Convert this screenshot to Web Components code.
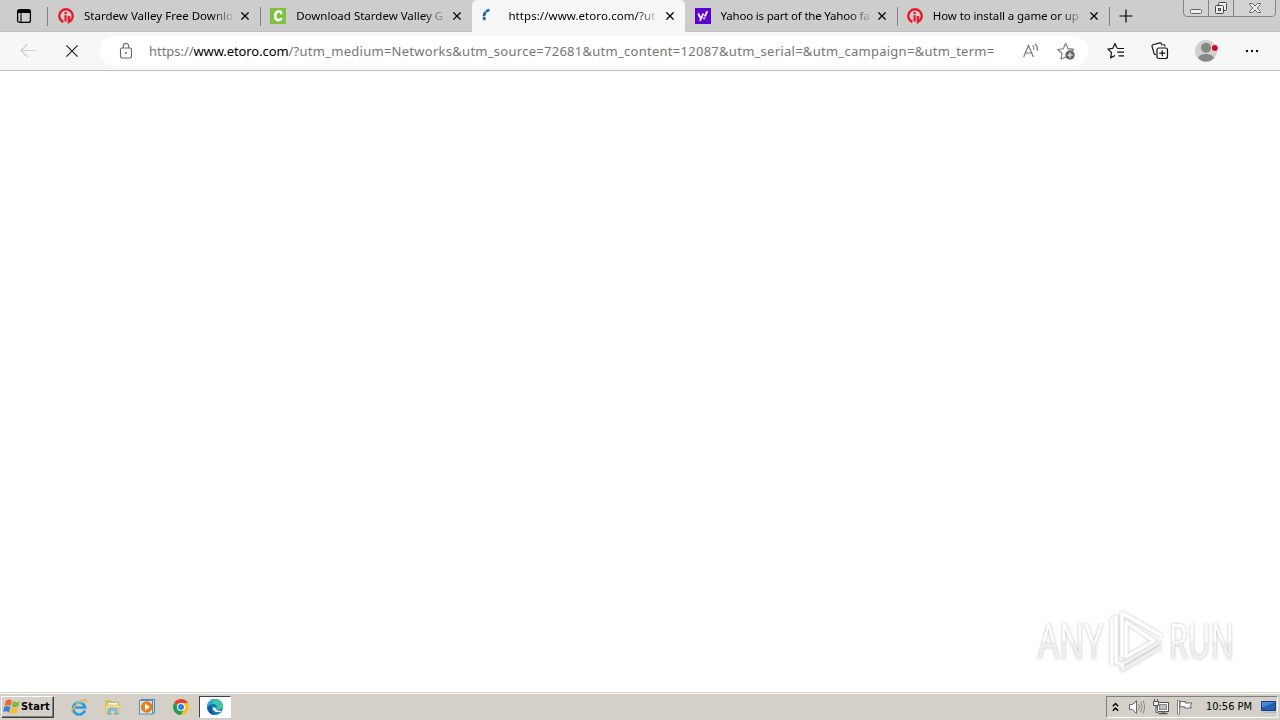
<!DOCTYPE html>
<html lang="en"><head><meta charset="utf-8"><title>Browser</title>
<style>html,body{margin:0;height:100%;overflow:hidden;background:#fff}</style></head>
<body><desktop-screen></desktop-screen>
<script>
const define = (name, html, init) => {
  const t = document.createElement('template');
  t.innerHTML = html;
  customElements.define(name, class extends HTMLElement {
    constructor() { super(); this.attachShadow({mode: 'open'}).append(t.content.cloneNode(true)); }
    connectedCallback() { if (init) init(this, this.shadowRoot); }
  });
};

/* Text spaced so that it fills the width given in "w" */
define('fit-text', `<style>:host{display:inline-block;white-space:pre;flex:none}span{display:inline-block}</style><span></span>`, (el, r) => {
  const s = r.querySelector('span'), text = el.getAttribute('text');
  s.textContent = text;
  const w = +el.getAttribute('w');
  el.style.width = w + 'px';
  s.style.letterSpacing = (w - s.getBoundingClientRect().width) / text.length + 'px';
});

const icons = {
  tabs: ['0 0 16 16', `<rect x="1.600" y="1.600" width="12.800" height="12.800" rx="2" fill="none" stroke="#000" stroke-width="1.300"/><path d="M1.600 5V3.400Q1.600 1.600 3.400 1.600h9.200q1.800 0 1.800 1.800V5z" fill="#000"/><path d="M5 5v9.400" stroke="#000" stroke-width="1.100"/>`],
  ig: ['0 0 16 16', `<path d="M5.300 14.100A6.700 6.700 0 1 1 10.900 14V8" fill="none" stroke="#ea1a2a" stroke-width="2.400"/><path d="M7.600 7.200v6.300" stroke="#ea1a2a" stroke-width="2.300"/><circle cx="7.600" cy="5" r="1.300" fill="#ea1a2a"/>`],
  croco: ['0 0 16 16', `<path fill="#7fc242" d="M0 0h16v16H0z"/><path d="M11.200 5.300c.2-3.500-5.600-2.400-6 2.200-.4 5 3.400 5.500 6 3.500" fill="none" stroke="#fff" stroke-width="2.500" stroke-linecap="round"/>`],
  spin: ['0 0 16 16', `<path d="M7.500 2A6.500 6.500 0 0 0 3 12" fill="none" stroke="#1768a8" stroke-width="2.700" stroke-dasharray="4 .7"/>`],
  yahoo: ['0 0 16 16', `<path fill="#5f01d1" d="M0 0h16v16H0z"/><path d="M3.200 5.500l2.300 4.700M8.300 5.500L5 13" fill="none" stroke="#fff" stroke-width="1.800"/><path d="M12.300 3.200L9.800 8.500" stroke="#fff" stroke-width="1.800"/><circle cx="9.200" cy="10.300" r="1.100" fill="#fff"/>`],
  close: ['0 0 8 8', `<path d="M.4.4l7.200 7.200M7.600.4L.4 7.600" stroke="#000" stroke-width="1.300"/>`],
  plus: ['0 0 14 14', `<path d="M7 .5v13M.5 7h13" stroke="#000" stroke-width="1.200"/>`],
  back: ['0 0 16 16', `<path d="M15.500 7.500H1M7.500 1L1 7.500 7.500 14" fill="none" stroke="#cecece" stroke-width="1.200"/>`],
  stop: ['0 0 12 12', `<path d="M.4.4l11.200 11.200M11.600.4L.4 11.600" stroke="#1b1b1b" stroke-width="1.150"/>`],
  lock: ['0 0 14 16', `<rect x="1.500" y="5" width="11" height="10" rx="1.500" fill="none" stroke="#666" stroke-width="1.100"/><path d="M4.300 5V3.200a2.700 2.700 0 0 1 5.400 0V5" fill="none" stroke="#666" stroke-width="1.100"/><circle cx="7" cy="10" r="1" fill="#666"/>`],
  read: ['0 0 16 16', `<path d="M.7 14L5.500 2.300 10.300 14M2.400 10h6.200" fill="none" stroke="#777" stroke-width="1.200"/><path d="M9.500 2.400q2 1.800 1.300 4.300M12 .8q3.200 3 2 7" fill="none" stroke="#777" stroke-width="1.200"/>`],
  staradd: ['0 0 18 18', `<path d="M9 15l-5 2 1-5.500-4.200-4 5.500-.8L8.700 1.300 11 6.600l5.700.8-2 2" fill="none" stroke="#777" stroke-width="1.100" stroke-linejoin="round"/><circle cx="13" cy="13" r="4.700" fill="#626262"/><path d="M13 10.300v5.400M10.300 13h5.400" stroke="#fff" stroke-width="1.100"/>`],
  fav: ['0 0 18 18', `<path d="M10 6L8 1.600 5.800 6.300.9 7l3.600 3.600-.9 5.300L8 13.500M10.200 6.500H17M10.200 10.200H17M11.500 13.900H17" fill="none" stroke="#111" stroke-width="1.200" stroke-linejoin="round"/>`],
  coll: ['0 0 18 18', `<path d="M5 12.700L3.300 12 1 4.500Q.7 3.200 2 2.700L8.800.9Q10.300.6 10.700 2l.4 1.500M14 4.500V4q0-1.400-1.700-1.400" fill="none" stroke="#111" stroke-width="1.100"/><rect x="6" y="6" width="10.500" height="10.500" rx="2" fill="#f7f7f7" stroke="#111" stroke-width="1.200"/><path d="M11.250 8.200v6M8.250 11.200h6" stroke="#111" stroke-width="1.200"/>`],
  user: ['0 0 24 24', `<circle cx="11" cy="12" r="11" fill="#d1d0ce"/><circle cx="11" cy="8.800" r="5" fill="#8a8886"/><path d="M3.300 19.500c0-6 15.400-6 15.400 0q-7.500 6.500-15.400 0z" fill="#8a8886"/><circle cx="19.800" cy="9" r="3.600" fill="#eee"/><circle cx="19.800" cy="9" r="2.900" fill="#d3081a"/>`],
  more: ['0 0 14 4', `<g fill="#111"><circle cx="2" cy="2" r="1.200"/><circle cx="7" cy="2" r="1.200"/><circle cx="12" cy="2" r="1.200"/></g>`],
  min: ['0 0 14 14', `<rect x="1.500" y="8.500" width="11" height="4" rx="1" fill="#eee" stroke="#666"/>`],
  restore: ['0 0 14 14', `<rect x="4.500" y="1.500" width="8" height="8" rx="1" fill="#eee" stroke="#444"/><rect x="1.500" y="4.500" width="8" height="8" rx="1" fill="#eee" stroke="#444"/><rect x="4.500" y="7.500" width="2" height="2" fill="none" stroke="#444"/>`],
  winx: ['0 0 14 14', `<path d="M1.500 2.500h3.200L7 5.200l2.300-2.700h3.200v1L9.200 7l3.300 3.500v1H9.300L7 8.800l-2.300 2.700H1.500v-1L4.800 7 1.500 3.500z" fill="#eee" stroke="#666"/>`],
  win: ['0 0 18 17', `<path d="M3 2.500q3-2 6 .2L7.700 8Q5 6 1.600 7.800z" fill="#ef6430"/><path d="M10 3.100q3 2 6.700.1L15.300 8.400q-3.600 1.600-6.500-.2z" fill="#7fb93c"/><path d="M1.400 8.700Q4.500 7 7.400 9L6 14.500Q3 12.500 0 14z" fill="#3784ce"/><path d="M8.500 9.300q3 1.700 6.600.2L13.700 14.700q-3.500 1.600-6.500 0z" fill="#f7bd29"/>`],
  ie: ['0 0 18 18', `<path d="M14.800 12.300A6 6 0 1 1 15 9.500H5" fill="none" stroke="#2d9be2" stroke-width="2.700"/><path d="M2.500 15.500C-1 13 8 3.500 14.200 1.700q3.300-.6 1.600 3.200" fill="none" stroke="#e3b545" stroke-width="1.400"/><path d="M5.500 5.300Q9 2.800 12.500 5" fill="none" stroke="#8dd3f5"/>`],
  folder: ['0 0 18 18', `<path d="M1.500 3.500l1-1.500h4l1 1.500H15V8H1.500z" fill="#dfbb57"/><path d="M3.500 4.500h10.500V9H3.500z" fill="#fff" stroke="#91b976" stroke-width=".7"/><path d="M1.500 7h14.500l-.7 8.500H2z" fill="#f4db83" stroke="#d4b565" stroke-width=".7"/><path d="M4 16.500V11.500q0-1.500 1.500-1.500h6.500q1.500 0 1.500 1.500v5H11v-4H6.500v4z" fill="#80c4e7" stroke="#559bbb" stroke-width=".5"/>`],
  media: ['0 0 18 18', `<rect x="3" y="1.500" width="13.500" height="13.500" fill="#b9dbef" stroke="#4e8ab7"/><rect x="1.500" y="2.500" width="13" height="13.500" fill="#d0e7f4" stroke="#5a91b5"/><circle cx="8.700" cy="9" r="5.800" fill="#ef7b13"/><path d="M7 5.500v7l5-3.500z" fill="#fff"/>`],
  chrome: ['0 0 18 18', `<path d="M9 9L2.100 5A8 8 0 0 1 15.900 5z" fill="#e34133"/><path d="M2.100 5A8 8 0 0 0 9 17l3.500-6L9 9z" fill="#229d52"/><path d="M15.900 5A8 8 0 0 1 9 17l3.500-6L9 5z" fill="#fbc318"/><circle cx="9" cy="9" r="4" fill="#fff"/><circle cx="9" cy="9" r="3" fill="#397de5"/>`],
  edge: ['0 0 18 18', `<circle cx="9" cy="9" r="8" fill="#1477bd"/><path d="M1 9C1-1.500 17-1.500 17 8c0 4-6 4.500-6.500 2C12 7 8 5 5 6Q2 7 1 9z" fill="#42c7a1"/><path d="M1 8.500Q2 1 9.500 1 6 6 1 8.500z" fill="#2bafd8"/><path d="M6.500 9Q6.500 14 12 14.200q3 .1 4-2-.5.5-2.500.6-3.500 0-3.400-2.800z" fill="#fff"/><path d="M6.700 8.200Q3.500 12 8.700 17 3 16.500 1.200 10.500 3 7 6.700 8.200z" fill="#1453a3"/>`],
  chev: ['0 0 7 10', `<path d="M.8 4.200L3.500 1.500l2.700 2.700M.8 8.700L3.500 6l2.700 2.700" fill="none" stroke="#000" stroke-width="1.500"/>`],
  sound: ['0 0 18 18', `<path d="M1.500 6.500h3L8.500 2.500v13l-4-4h-3z" fill="#fff" stroke="#666"/><path d="M10.500 6q2 3 0 6M12.700 4q3 5 0 10M14.900 2.700q3.400 6.300 0 12.600" fill="none" stroke="#888" stroke-width="1"/>`],
  net: ['0 0 18 18', `<rect x="5.500" y="4.500" width="11" height="9" fill="#fff" stroke="#555"/><rect x="7.500" y="6.500" width="7" height="5" fill="#bbb" stroke="#888"/><path d="M6.500 15.500h9M11.500 13.500v2" stroke="#555" stroke-width="1.500"/><path d="M1.500 3.500h5v4h-5zM2.500 1v2M5.500 1v2M4 7.500v7h2" fill="#eee" stroke="#555"/>`],
  flag: ['0 0 18 18', `<path d="M2.500 2v14.500" stroke="#555" stroke-width="2.300"/><path d="M2.500 2.500v13.500" stroke="#fff"/><path d="M4 3.500h5.500v1.500H16l-2 3 1.500 2H8.500V8.800H4z" fill="#fff" stroke="#666"/>`],
  desktop: ['0 0 18 16', `<path d="M1.500 2.500h14v9h-14z" fill="#245fb5" stroke="#163c7d"/><path d="M2 3h13L2 8.500z" fill="#4f8ad6"/><path d="M2 12.500h14l1.500 1.500H3.500z" fill="#a9bdce"/>`]
};
define('ui-icon', `<style>:host{display:block;flex:none}svg{display:block;width:100%;height:100%}</style><svg></svg>`, (el, r) => {
  const [box, body] = icons[el.getAttribute('name')], s = r.querySelector('svg');
  s.setAttribute('viewBox', box); s.innerHTML = body;
  const [, , w, h] = box.split(' ');
  el.style.width = w + 'px'; el.style.height = h + 'px';
});

define('browser-tab', `<style>
:host{display:flex;box-sizing:border-box;width:212.200px;height:32px;align-items:center;padding:0 11px 0 10px;flex:none;position:relative}
:host([active]){background:#f7f7f7;border-radius:5px 5px 0 0}
:host([sep])::after{content:"";position:absolute;left:212px;top:7px;width:1px;height:19px;background:#808080}
.label{margin-left:10px;width:149px;overflow:hidden;height:18px;line-height:18px;-webkit-mask-image:linear-gradient(90deg,#000 86%,transparent 102%)}
.x{margin-left:auto}
</style><slot></slot><div class="label"></div><ui-icon class="x" name="close"></ui-icon>`, (el, r) => {
  const f = document.createElement('fit-text');
  f.setAttribute('text', el.getAttribute('label')); f.setAttribute('w', el.getAttribute('w'));
  r.querySelector('.label').append(f);
});

define('window-buttons', `<style>
:host{display:flex;position:absolute;right:4px;top:-1px;height:18px;box-sizing:border-box;border:1px solid #858585;border-radius:0 0 4px 4px;background:#d2d2d2}
div{display:flex;align-items:center;justify-content:center;width:24px}
div+div{border-left:1px solid #858585}.c{width:41px}
</style><div><ui-icon name="min"></ui-icon></div><div><ui-icon name="restore"></ui-icon></div><div class="c"><ui-icon name="winx"></ui-icon></div>`);

define('tab-strip', `<style>
:host{display:flex;height:32px;background:#cdcdcd;align-items:center;position:relative;font:11.500px/18px "Noto Sans","Open Sans",sans-serif;color:#000;box-shadow:inset 0 -1px #c0c0c0}
.lead{width:48px;height:32px;box-sizing:border-box;padding:8px 0 0 16px;position:relative;flex:none}
.lead::after{content:"";position:absolute;left:47px;top:7px;width:1px;height:19px;background:#808080}
.plus{margin-left:10px}
</style><div class="lead"><ui-icon name="tabs"></ui-icon></div>
<browser-tab sep label="Stardew Valley Free Downlo" w="149"><ui-icon name="ig"></ui-icon></browser-tab>
<browser-tab label="Download Stardew Valley G" w="147"><ui-icon name="croco"></ui-icon></browser-tab>
<browser-tab active label="https://www.etoro.com/?ut" w="147"><ui-icon name="spin"></ui-icon></browser-tab>
<browser-tab sep label="Yahoo is part of the Yahoo fa" w="149"><ui-icon name="yahoo"></ui-icon></browser-tab>
<browser-tab sep label="How to install a game or up" w="146"><ui-icon name="ig"></ui-icon></browser-tab>
<ui-icon class="plus" name="plus"></ui-icon><window-buttons></window-buttons>`);

define('address-bar', `<style>
:host{display:flex;box-sizing:border-box;width:988px;height:30px;border-radius:15px;background:#fff;align-items:center;padding:0 13px 0 19px;font:13px/20px "Noto Sans","Open Sans",sans-serif;color:#767676;flex:none}
.u{display:flex;margin-left:16px}.h{color:#000}.r{margin-left:auto}.s{margin-left:18px}
</style><ui-icon name="lock"></ui-icon><div class="u"><fit-text text="https://" w="44.500"></fit-text><fit-text class="h" text="www.etoro.com" w="95"></fit-text><fit-text text="/?utm_medium=Networks&amp;utm_source=72681&amp;utm_content=12087&amp;utm_serial=&amp;utm_campaign=&amp;utm_term=" w="706"></fit-text></div>
<ui-icon class="r" name="read"></ui-icon><ui-icon class="s" name="staradd"></ui-icon>`);

define('tool-bar', `<style>
:host{display:flex;height:39px;box-sizing:border-box;background:#f7f7f7;border-bottom:1px solid #bdbdbd;align-items:center;padding-left:20px}
.stop{margin:0 22px 0 30px}.f{margin-left:19px}.c{margin-left:26px}.p{margin-left:26px}.m{margin-left:26px}
</style><ui-icon name="back"></ui-icon><ui-icon class="stop" name="stop"></ui-icon><address-bar></address-bar><ui-icon class="f" name="fav"></ui-icon><ui-icon class="c" name="coll"></ui-icon><ui-icon class="p" name="user"></ui-icon><ui-icon class="m" name="more"></ui-icon>`);

define('any-run-mark', `<style>
:host{display:flex;position:absolute;left:1038px;top:609px;align-items:center;font:50px/64px "Open Sans","Noto Sans",sans-serif;filter:drop-shadow(0 0 1.500px #bbb)}
.t{width:66px;display:block}.t span{display:block;width:max-content;transform-origin:0 50%;font-weight:500;background:linear-gradient(#fff 53%,#f0f0f0 53%);-webkit-background-clip:text;color:transparent}
svg{display:block;margin:0 3px 0 4px}
</style><div class="t"><span>ANY</span></div><svg width="58" height="64" viewBox="0 0 58 64"><g fill="none" stroke="#fff" stroke-width="3.500" stroke-linejoin="round"><path d="M14 48V4l40 23"/><path d="M52 33L14 55v6l39-23" stroke="#f0f0f0"/><path d="M4 56V10l4-2v45l8 4"/><path d="M18 13v35l28-16z"/></g></svg><div class="t"><span>RUN</span></div>`, (el, r) => {
  for (const s of r.querySelectorAll('span')) s.style.transform = 'translateY(-1px) scaleX(' + 65 / s.offsetWidth + ')';
});

define('task-bar', `<style>
:host{display:flex;height:28px;box-sizing:border-box;background:#d4d0c8;border-top:1px solid #d4d0c8;box-shadow:inset 0 1px #fff;align-items:center;font:11px/16px "DejaVu Sans Condensed","DejaVu Sans",sans-serif;color:#000;padding:2px 2px 2px 1px}
.start{display:flex;align-items:center;box-sizing:border-box;width:53px;height:22px;border:1px solid;border-color:#fff #404040 #404040 #fff;box-shadow:inset -1px -1px #808080;padding-left:1px;font-weight:bold}
.app{display:flex;box-sizing:border-box;width:34px;height:22px;align-items:center;justify-content:center}
.first{margin-left:8px}.on{width:32px;margin-left:1px;background:#fff;border:1px solid;border-color:#404040 #fff #fff #404040}
.tray{display:flex;align-items:center;margin-left:auto;box-sizing:border-box;width:172px;height:22px;border:1px solid;border-color:#808080 #fff #fff #808080;padding-left:5px}
.a{margin-left:9px}.b{margin-left:6px}.d{margin-left:6px}.e{margin-left:12px}.f{margin-left:8px}
</style><div class="start"><ui-icon name="win"></ui-icon><fit-text text="Start" w="29"></fit-text></div>
<div class="app first"><ui-icon name="ie"></ui-icon></div><div class="app"><ui-icon name="folder"></ui-icon></div><div class="app"><ui-icon name="media"></ui-icon></div><div class="app"><ui-icon name="chrome"></ui-icon></div><div class="app on"><ui-icon name="edge"></ui-icon></div>
<div class="tray"><ui-icon name="chev"></ui-icon><ui-icon class="a" name="sound"></ui-icon><ui-icon class="b" name="net"></ui-icon><ui-icon class="d" name="flag"></ui-icon><fit-text class="e" text="10:56 PM" w="46"></fit-text><ui-icon class="f" name="desktop"></ui-icon></div>`);

define('desktop-screen', `<style>:host{display:flex;flex-direction:column;width:1280px;height:720px;overflow:hidden;position:relative}main{flex:1;background:#fff}</style><tab-strip></tab-strip><tool-bar></tool-bar><main></main><task-bar></task-bar><any-run-mark></any-run-mark>`);
</script></body></html>
